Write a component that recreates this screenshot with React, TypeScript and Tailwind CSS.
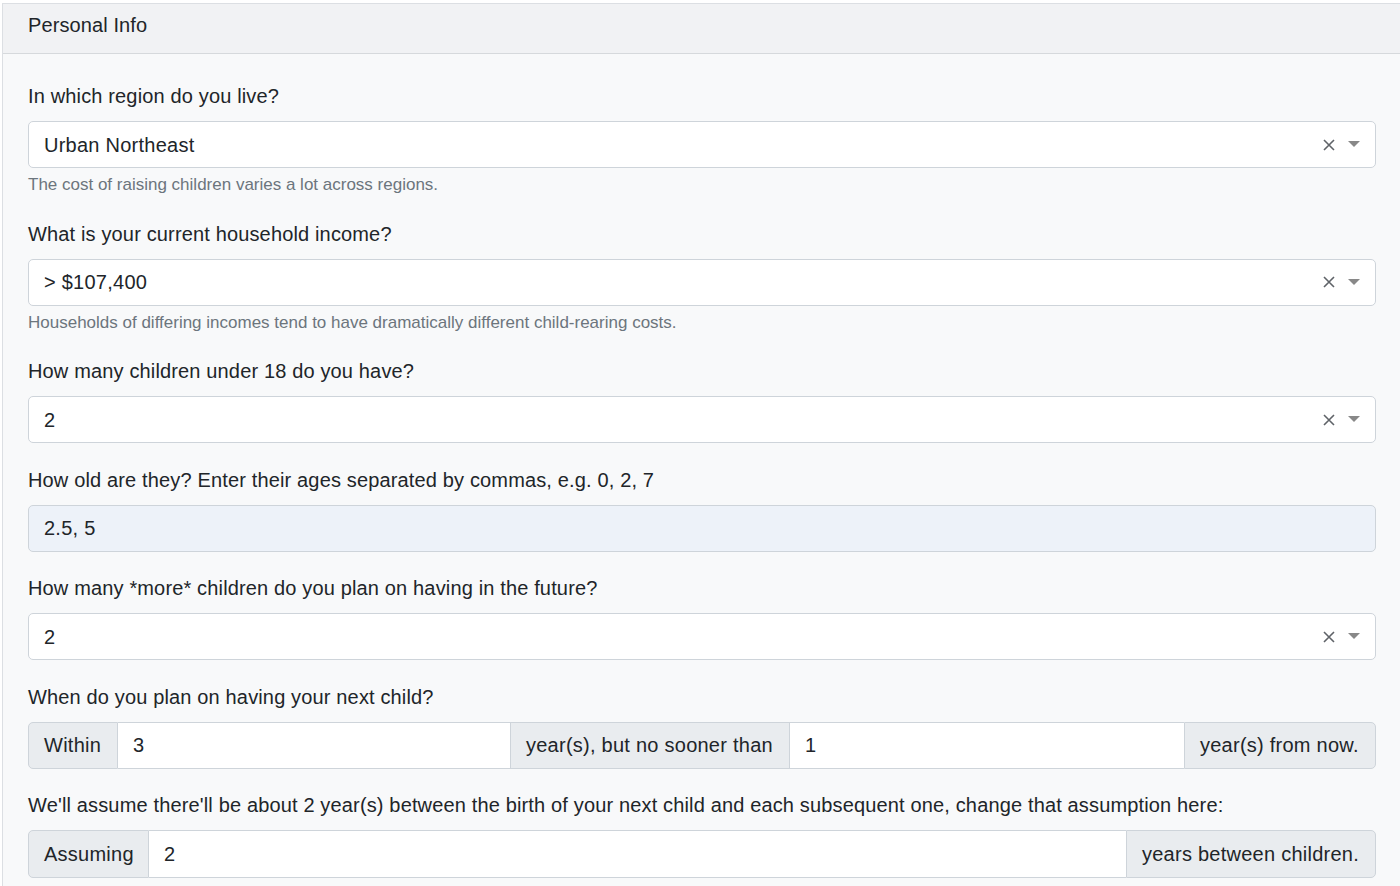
import React from "react";

const font = { fontFamily: '"Liberation Sans", Arial, sans-serif' };

function SelectBox({ value }: { value: string }) {
  return (
    <div className="flex h-[47px] items-center rounded-[5px] border border-[#ced4da] bg-white pl-[15px] pr-[15px] text-[20px] tracking-[0.25px] text-[#212529]">
      <span className="flex-1">{value}</span>
      <svg width="12" height="12" viewBox="0 0 12 12" className="mr-[13px]">
        <path d="M1 1 L11 11 M11 1 L1 11" stroke="#5f6368" strokeWidth="1.6" />
      </svg>
      <svg width="12" height="7" viewBox="0 0 12 7">
        <path d="M0 0 H12 L6 6 Z" fill="#888" />
      </svg>
    </div>
  );
}

function Field({
  label,
  help,
  children,
}: {
  label: string;
  help?: string;
  children: React.ReactNode;
}) {
  return (
    <div className="mb-[21.5px]">
      <div className="mb-[10px] h-[30px] whitespace-nowrap text-[20px] leading-[30px] tracking-[0.15px] text-[#212529]">
        {label}
      </div>
      {children}
      {help && (
        <div className="mt-[5px] h-[24px] text-[17px] leading-[24px] text-[#6c757d]">
          {help}
        </div>
      )}
    </div>
  );
}

function Addon({
  text,
  className,
}: {
  text: string;
  className: string;
}) {
  return (
    <div
      className={
        "flex items-center whitespace-nowrap border-[#ced4da] bg-[#e9ecef] px-[15px] text-[20px] tracking-[0.25px] text-[#212529] " +
        className
      }
    >
      {text}
    </div>
  );
}

function Input({ value, className }: { value: string; className: string }) {
  return (
    <div
      className={
        "flex items-center border-[#ced4da] bg-white px-[15px] text-[20px] text-[#212529] " +
        className
      }
    >
      {value}
    </div>
  );
}

export default function App() {
  return (
    <div className="h-[886px] overflow-hidden bg-white pl-[2px] pt-[3px]" style={font}>
      <div className="h-[900px] w-[1420px] border-l border-t border-[#dcdfe3] bg-[#f8f9fa]">
        <div className="flex h-[50px] items-center border-b border-[#d6d9dc] bg-[#f1f2f4] px-[25px] pb-[8px] text-[20px] tracking-[0.1px] text-[#212529]">
          Personal Info
        </div>
        <div className="w-[1373px] pl-[25px] pt-[27px]">
          <Field
            label="In which region do you live?"
            help="The cost of raising children varies a lot across regions."
          >
            <SelectBox value="Urban Northeast" />
          </Field>
          <Field
            label="What is your current household income?"
            help="Households of differing incomes tend to have dramatically different child-rearing costs."
          >
            <SelectBox value="> $107,400" />
          </Field>
          <Field label="How many children under 18 do you have?">
            <SelectBox value="2" />
          </Field>
          <Field label="How old are they? Enter their ages separated by commas, e.g. 0, 2, 7">
            <div className="flex h-[47px] items-center rounded-[5px] border border-[#ced4da] bg-[#edf2f9] px-[15px] text-[20px] tracking-[0.25px] text-[#212529]">
              2.5, 5
            </div>
          </Field>
          <Field label="How many *more* children do you plan on having in the future?">
            <SelectBox value="2" />
          </Field>
          <Field label="When do you plan on having your next child?">
            <div className="flex h-[47px]">
              <Addon text="Within" className="w-[90px] rounded-l-[5px] border" />
              <Input value="3" className="w-[392px] border-y" />
              <Addon text="year(s), but no sooner than" className="w-[280px] border" />
              <Input value="1" className="w-[394px] border-y" />
              <Addon text="year(s) from now." className="flex-1 rounded-r-[5px] border" />
            </div>
          </Field>
          <Field label="We'll assume there'll be about 2 year(s) between the birth of your next child and each subsequent one, change that assumption here:">
            <div className="flex h-[48px]">
              <Addon text="Assuming" className="w-[121px] rounded-l-[5px] border" />
              <Input value="2" className="w-[977px] border-y" />
              <Addon text="years between children." className="flex-1 rounded-r-[5px] border" />
            </div>
          </Field>
        </div>
      </div>
    </div>
  );
}
